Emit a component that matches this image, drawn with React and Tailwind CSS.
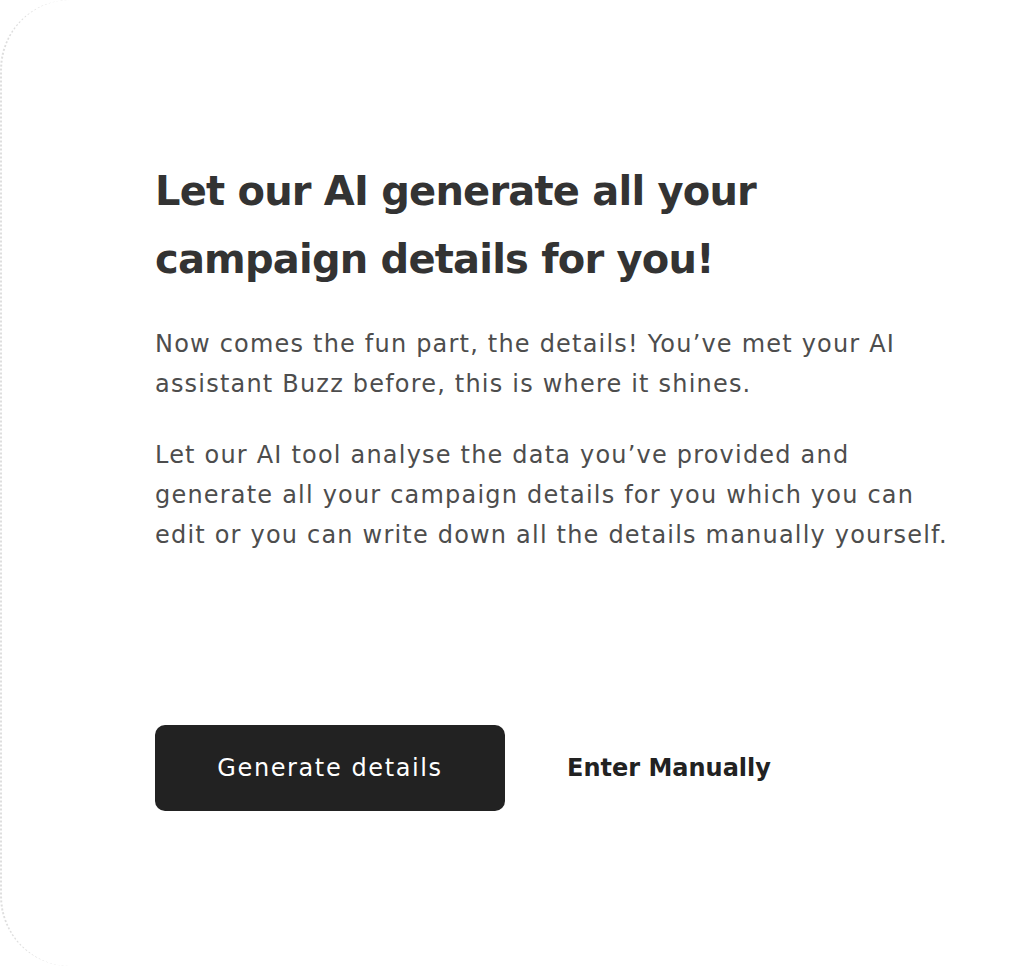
export default function App() {
  return (
    <div className="w-full h-[966px] bg-white overflow-hidden" style={{ fontFamily: '"DejaVu Sans", Inter, sans-serif' }}>
      <div className="w-[1200px] h-[966px] rounded-[70px] border-l-2 border-dotted border-[#dedede] bg-white pl-[153px] pt-[157px]">
        <h1 className="text-[40px] leading-[68px] font-bold text-[#333333] tracking-[-0.8px]">
          Let our AI generate all your
          <br />
          campaign details for you!
        </h1>
        <div className="mt-[31px] text-[24px] leading-[40px] text-[#4d4d4d] tracking-[1.2px]">
          <p>
            Now comes the fun part, the details! You’ve met your AI
            <br />
            assistant Buzz before, this is where it shines.
          </p>
          <p className="mt-[31px]">
            Let our AI tool analyse the data you’ve provided and
            <br />
            generate all your campaign details for you which you can
            <br />
            edit or you can write down all the details manually yourself.
          </p>
        </div>
        <div className="mt-[170px] flex items-center">
          <button className="w-[350px] h-[86px] rounded-[10px] bg-[#222222] text-white text-[24px] tracking-[1.6px]">
            Generate details
          </button>
          <button className="ml-[62px] text-[24px] font-bold text-[#222222]">
            Enter Manually
          </button>
        </div>
      </div>
    </div>
  );
}
